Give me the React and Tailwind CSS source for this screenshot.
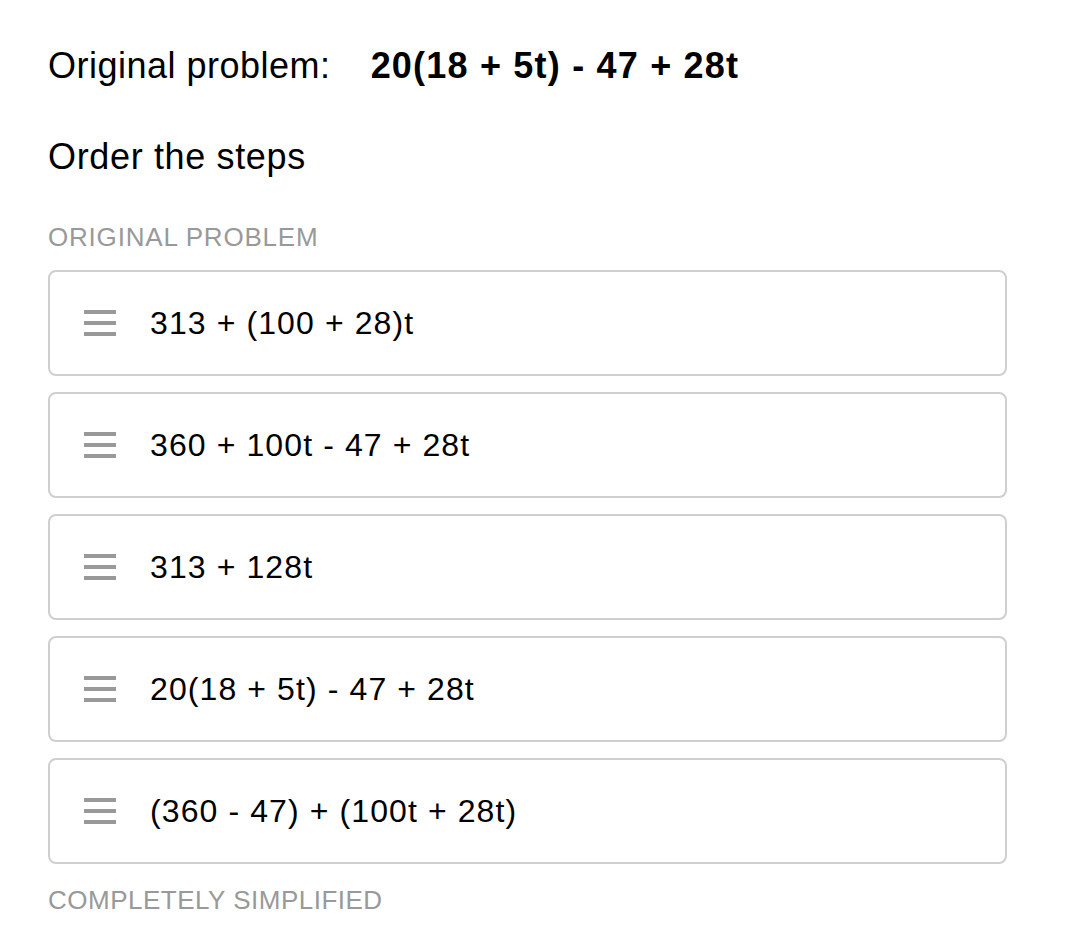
import { useState } from "react";

const initialSteps = [
  { id: 1, text: "313 + (100 + 28)t" },
  { id: 2, text: "360 + 100t - 47 + 28t" },
  { id: 3, text: "313 + 128t" },
  { id: 4, text: "20(18 + 5t) - 47 + 28t" },
  { id: 5, text: "(360 - 47) + (100t + 28t)" },
];

const Handle = () => (
  <svg width="32" height="26" viewBox="0 0 32 26" className="flex-shrink-0">
    <rect x="0" y="0" width="32" height="4" fill="#999999" />
    <rect x="0" y="11" width="32" height="4" fill="#999999" />
    <rect x="0" y="22" width="32" height="4" fill="#999999" />
  </svg>
);

const App = () => {
  const [steps] = useState(initialSteps);

  return (
    <div className="min-h-[942px] bg-white px-[48px] pt-[44px] text-black font-['Liberation_Sans',Arial,sans-serif]">
      <div className="flex items-center text-[36px] leading-[44px]">
        <span className="tracking-[0.5px]">Original problem:</span>
        <span className="ml-[40px] font-bold tracking-[1.2px]">20(18 + 5t) - 47 + 28t</span>
      </div>

      <div className="mt-[47px] text-[36px] leading-[44px] tracking-[0.65px]">Order the steps</div>

      <div className="mt-[42px] text-[26px] leading-[32px] text-[#999999] tracking-[0.8px]">
        ORIGINAL PROBLEM
      </div>

      <div className="mt-[17px] flex flex-col gap-[16px] w-[959px]">
        {steps.map((step) => (
          <div
            key={step.id}
            className="flex items-center h-[106px] border-2 border-[#cfcfcf] rounded-[8px] pl-[34px]"
          >
            <Handle />
            <span className="ml-[34px] text-[32px] leading-[40px] tracking-[1.1px]">{step.text}</span>
          </div>
        ))}
      </div>

      <div className="mt-[20px] text-[26px] leading-[32px] text-[#999999] tracking-[0.5px]">
        COMPLETELY SIMPLIFIED
      </div>
    </div>
  );
};

export default App;
